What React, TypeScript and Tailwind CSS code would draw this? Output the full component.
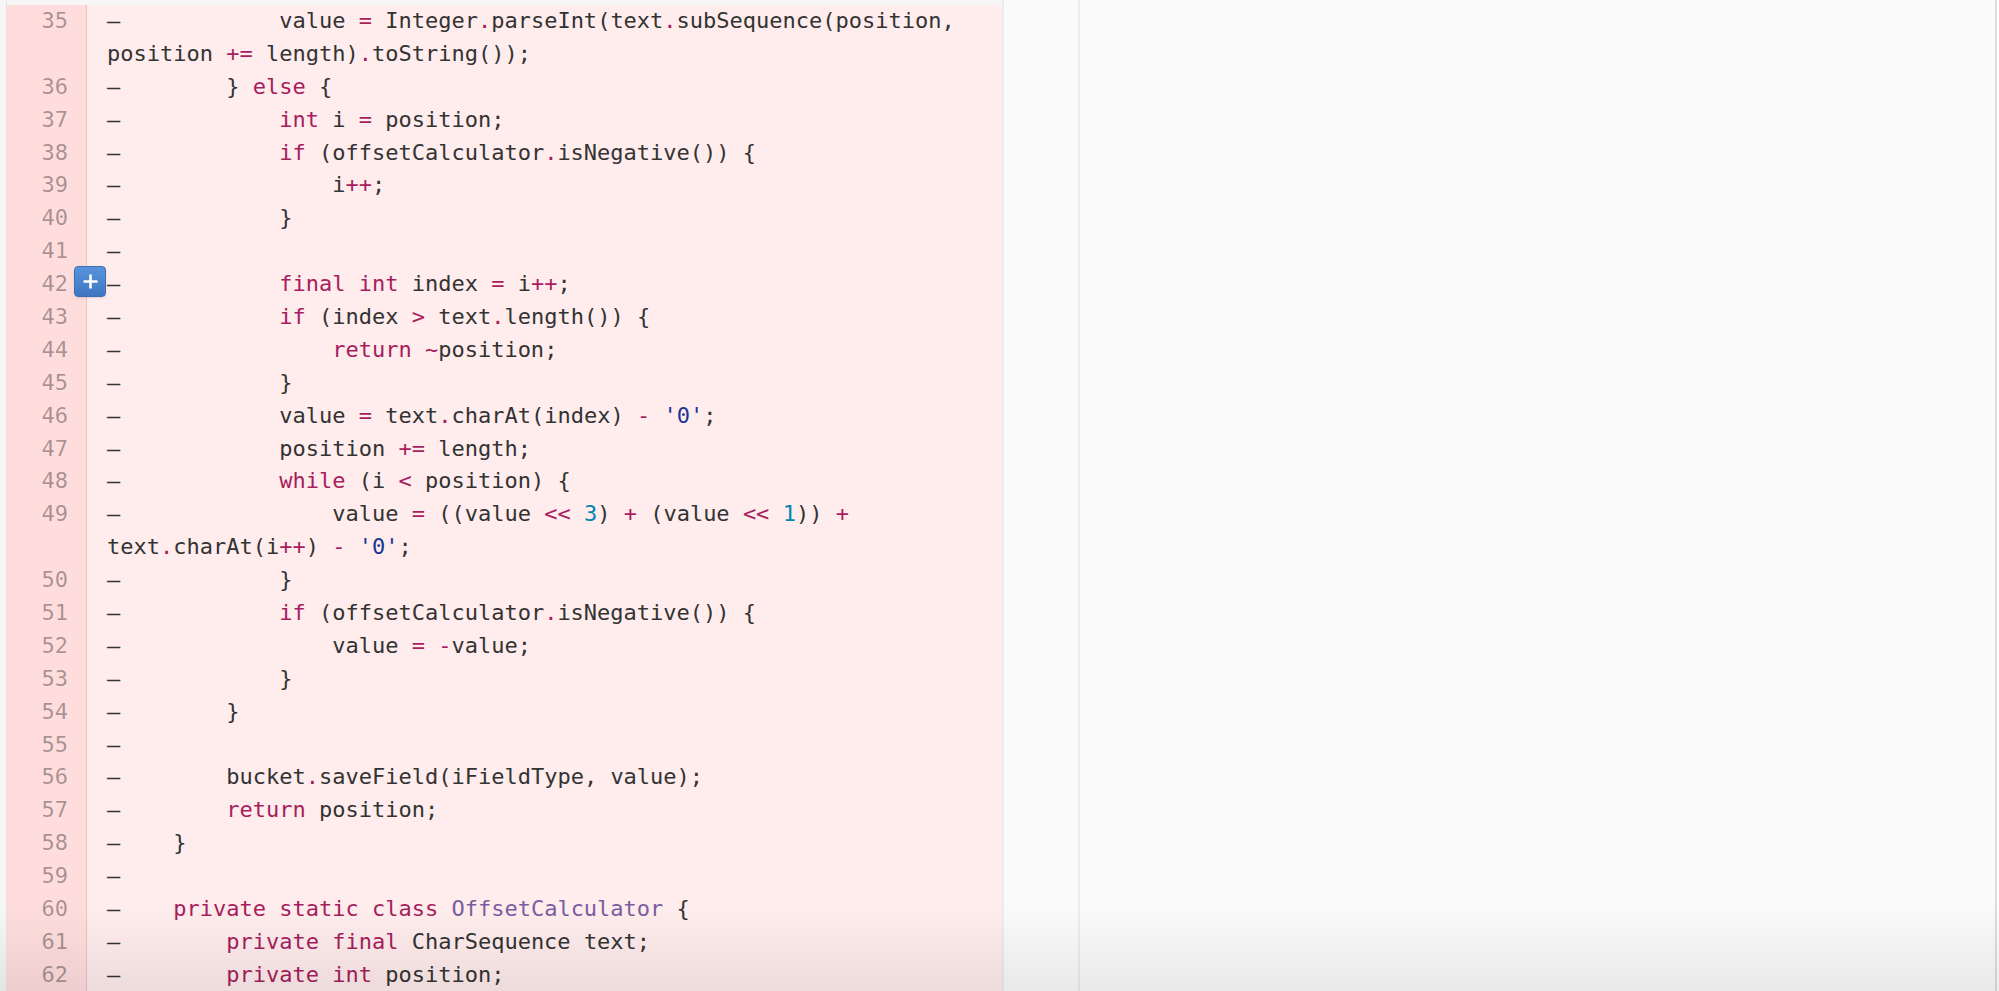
import React from "react"

type Row = { num?: number; code: string; plus?: boolean }

const rows: Row[] = [
  { num: 35, code: "            value = Integer.parseInt(text.subSequence(position," },
  { code: "position += length).toString());" },
  { num: 36, code: "        } else {" },
  { num: 37, code: "            int i = position;" },
  { num: 38, code: "            if (offsetCalculator.isNegative()) {" },
  { num: 39, code: "                i++;" },
  { num: 40, code: "            }" },
  { num: 41, code: "" },
  { num: 42, code: "            final int index = i++;", plus: true },
  { num: 43, code: "            if (index > text.length()) {" },
  { num: 44, code: "                return ~position;" },
  { num: 45, code: "            }" },
  { num: 46, code: "            value = text.charAt(index) - '0';" },
  { num: 47, code: "            position += length;" },
  { num: 48, code: "            while (i < position) {" },
  { num: 49, code: "                value = ((value << 3) + (value << 1)) +" },
  { code: "text.charAt(i++) - '0';" },
  { num: 50, code: "            }" },
  { num: 51, code: "            if (offsetCalculator.isNegative()) {" },
  { num: 52, code: "                value = -value;" },
  { num: 53, code: "            }" },
  { num: 54, code: "        }" },
  { num: 55, code: "" },
  { num: 56, code: "        bucket.saveField(iFieldType, value);" },
  { num: 57, code: "        return position;" },
  { num: 58, code: "    }" },
  { num: 59, code: "" },
  { num: 60, code: "    private static class OffsetCalculator {" },
  { num: 61, code: "        private final CharSequence text;" },
  { num: 62, code: "        private int position;" },
]

const keywords = new Set(["int", "if", "else", "final", "return", "while", "private", "static", "class"])

// tiny java highlighter, good enough for this hunk
function highlight(code: string) {
  const out: React.ReactNode[] = []
  const re = /('[^']*')|(\b\d+\b)|([A-Za-z_]\w*)|([=+\-<>~.!]+)|(\s+)|(.)/g
  let m: RegExpExecArray | null
  let prev = ""
  let i = 0
  while ((m = re.exec(code))) {
    const t = m[0]
    let cls = ""
    if (m[1]) cls = "text-[#183691]"
    else if (m[2]) cls = "text-[#0086b3]"
    else if (m[3]) {
      if (keywords.has(t)) cls = "text-[#a71d5d]"
      else if (prev === "class") cls = "text-[#795da3]"
    } else if (m[4]) cls = "text-[#a71d5d]"
    if (m[3]) prev = t
    out.push(<span key={i++} className={cls}>{t}</span>)
  }
  return out
}

function PlusButton() {
  return (
    <div className="absolute left-[67px] top-[-2px] w-[32px] h-[31px] rounded-[4px] border border-[#3b6fb8] bg-gradient-to-b from-[#5893dc] to-[#3f76c2] flex items-center justify-center shadow-sm z-10">
      <svg width="17" height="17" viewBox="0 0 17 17">
        <path d="M8.5 1.5v14M1.5 8.5h14" stroke="white" strokeWidth="2.6" />
      </svg>
    </div>
  )
}

export default function App() {
  return (
    <div className="relative flex h-[991px] w-full overflow-hidden bg-white font-['DejaVu_Sans_Mono',monospace] text-[22px] leading-[32.89px]">
      <div className="w-[7px] shrink-0 bg-[#f6f6f6] border-r border-[#e4e4e4]" />

      {/* deleted side */}
      <div className="w-[995px] shrink-0 flex flex-col pt-[5px] bg-[#f6f6f6]">
        {rows.map((r, idx) => (
          <div key={idx} className="flex">
            <div className="relative w-[80px] shrink-0 bg-[#ffdddd] border-r border-[#f1c0c0] text-right pr-[18px] text-black/35">
              {r.num ?? "\u00a0"}
              {r.plus && <PlusButton />}
            </div>
            <div className="flex-1 bg-[#ffecec] pl-[20px] whitespace-pre text-[#333]">
              {r.num !== undefined && <span>–</span>}
              {highlight(r.code)}
            </div>
          </div>
        ))}
      </div>

      {/* empty new side */}
      <div className="flex flex-1">
        <div className="w-[78px] shrink-0 bg-[#fafafa] border-l-2 border-[#ececec] border-r-2 border-r-[#ececec]" />
        <div className="flex-1 bg-[#fafafa] border-r-2 border-[#dcdcdc]" />
        <div className="w-[2px] bg-white" />
      </div>

      <div className="pointer-events-none absolute bottom-0 left-0 right-0 h-[85px] bg-gradient-to-b from-transparent to-black/[0.07]" />
    </div>
  )
}
